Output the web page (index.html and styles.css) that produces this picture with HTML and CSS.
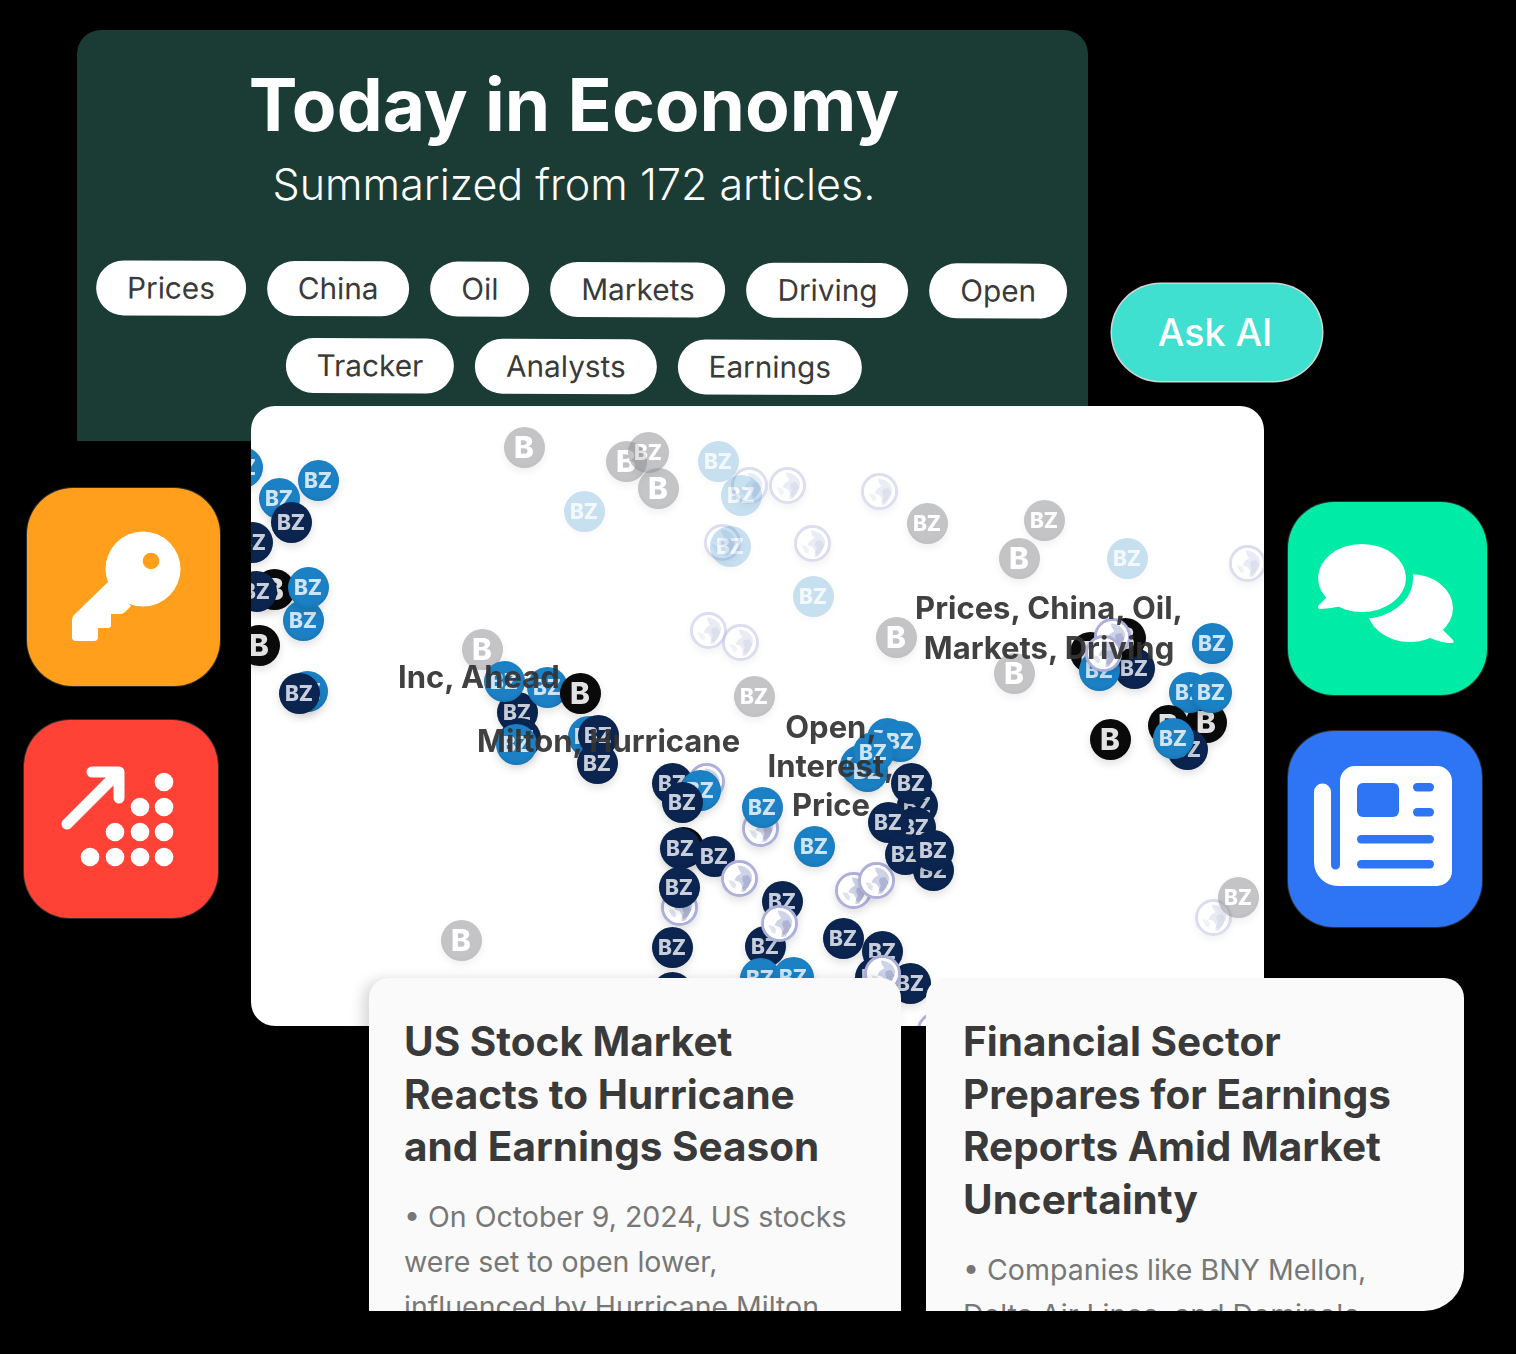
FILE: index.html
```html
<!DOCTYPE html>
<html lang="en">
<head>
<meta charset="utf-8">
<title>Today in Economy</title>
<link rel="stylesheet" href="styles.css">
</head>
<body>
<svg class="defs" width="0" height="0" aria-hidden="true">
  <symbol id="earth" viewBox="0 0 36 36">
    <circle cx="18" cy="18" r="18" fill="#fff"/>
    <path d="M16 3C24 3 31 8 33 16L30 24 25 33 20 34 21 27 18 22 12 20 15 15 20 12 17 7z" fill="#cfd3e8"/>
    <path d="M22 15L28 14 32 20 28 28 23 32 21 29 23 24 21 19z" fill="#aeb5d4"/>
    <path d="M5 20L11 21 14 25 13 30 9 28z" fill="#dfe2f0"/>
  </symbol>
</svg>
<main class="stage">

  <section class="panel">
    <h1 class="panel-title">Today in Economy</h1>
    <p class="panel-sub">Summarized from 172 articles.</p>
    <div class="chips">
      <div class="chip-row first">
        <span class="chip">Prices</span><span class="chip">China</span><span class="chip">Oil</span><span class="chip">Markets</span><span class="chip">Driving</span><span class="chip">Open</span>
      </div>
      <div class="chip-row">
        <span class="chip">Tracker</span><span class="chip">Analysts</span><span class="chip">Earnings</span>
      </div>
    </div>
  </section>

  <button class="ask" type="button">Ask AI</button>

  <div class="tile orange">
    <svg viewBox="0 0 193 198" aria-hidden="true">
      <path class="w" d="M81 94L47 127q-2 2-2 5V149q0 4 4 4H67q4 0 4-4V140H81q3 0 3-3V126H93q3 0 5-2l6-6z"/>
      <circle class="w" cx="116" cy="81" r="37.5"/>
      <circle class="hole-o" cx="124" cy="73" r="8.3"/>
    </svg>
  </div>
  <div class="tile red">
    <svg viewBox="0 0 194 198" aria-hidden="true">
      <path class="arrow" d="M43 104L94 53M68 52H95V78"/>
      <circle class="w" cx="140" cy="62" r="9.3"/>
      <circle class="w" cx="116" cy="87" r="9.3"/><circle class="w" cx="140" cy="87" r="9.3"/>
      <circle class="w" cx="91" cy="112" r="9.3"/><circle class="w" cx="116" cy="112" r="9.3"/><circle class="w" cx="140" cy="112" r="9.3"/>
      <circle class="w" cx="66" cy="137" r="9.3"/><circle class="w" cx="91" cy="137" r="9.3"/><circle class="w" cx="116" cy="137" r="9.3"/><circle class="w" cx="140" cy="137" r="9.3"/>
    </svg>
  </div>
  <div class="tile green">
    <svg viewBox="0 0 199 193" aria-hidden="true">
      <path class="w" d="M155 128L165 138q2 3-2 3-9 0-21-5z"/>
      <ellipse class="w" cx="122" cy="106" rx="43" ry="34"/>
      <ellipse class="bubble" cx="74" cy="76" rx="44" ry="34" paint-order="stroke"/>
      <path class="w" d="M39 95L31 103q-3 3 1 4 10 0 21-3z"/>
    </svg>
  </div>
  <div class="tile blue">
    <svg viewBox="0 0 194 196" aria-hidden="true">
      <path class="w" d="M26 61a8.5 8.5 0 0 1 17 0V134a4.5 4.5 0 0 0 9 0V50a15 15 0 0 1 15-15H149a15 15 0 0 1 15 15V140a15 15 0 0 1-15 15H50a24 24 0 0 1-24-24z"/>
      <rect class="b" x="69" y="52" width="42" height="34" rx="6"/>
      <rect class="b" x="125" y="52" width="21" height="8.5" rx="4.2"/>
      <rect class="b" x="125" y="77" width="21" height="8.5" rx="4.2"/>
      <rect class="b" x="69" y="104" width="77" height="8.5" rx="4.2"/>
      <rect class="b" x="69" y="129" width="77" height="8.5" rx="4.2"/>
    </svg>
  </div>

  <section class="map">
    <i class="pin sky" style="left:-9px;top:61px">BZ</i>
    <i class="pin sky" style="left:67px;top:74px">BZ</i>
    <i class="pin sky" style="left:28px;top:92px">BZ</i>
    <i class="pin navy" style="left:40px;top:116px">BZ</i>
    <i class="pin navy" style="left:1px;top:136px">BZ</i>
    <i class="pin ink" style="left:23px;top:183px">B</i>
    <i class="pin navy" style="left:5px;top:185px">BZ</i>
    <i class="pin sky" style="left:52px;top:214px">BZ</i>
    <i class="pin sky" style="left:57px;top:181px">BZ</i>
    <i class="pin ink" style="left:8px;top:239px">B</i>
    <i class="pin sky" style="left:56px;top:285px">BZ</i>
    <i class="pin navy" style="left:48px;top:287px">BZ</i>

    <i class="pin grey ink" style="left:273px;top:41px">B</i>
    <i class="pin grey ink" style="left:375px;top:55px">B</i>
    <i class="pin grey" style="left:397px;top:46px">BZ</i>
    <i class="pin grey ink" style="left:407px;top:82px">B</i>
    <i class="pin sky faded" style="left:333px;top:105px">BZ</i>
    <i class="pin sky faded" style="left:467px;top:55px">BZ</i>
    <svg class="globe faded" style="left:498px;top:79px"><use href="#earth"/></svg>
    <svg class="globe faded" style="left:536px;top:79px"><use href="#earth"/></svg>
    <i class="pin sky faded" style="left:490px;top:89px">BZ</i>
    <svg class="globe faded" style="left:471px;top:136px"><use href="#earth"/></svg>
    <i class="pin sky faded" style="left:479px;top:140px">BZ</i>
    <svg class="globe faded" style="left:561px;top:137px"><use href="#earth"/></svg>
    <i class="pin sky faded" style="left:562px;top:190px">BZ</i>
    <svg class="globe faded" style="left:457px;top:224px"><use href="#earth"/></svg>
    <svg class="globe faded" style="left:489px;top:236px"><use href="#earth"/></svg>
    <svg class="globe faded" style="left:628px;top:85px"><use href="#earth"/></svg>
    <i class="pin grey" style="left:676px;top:117px">BZ</i>
    <i class="pin grey" style="left:793px;top:114px">BZ</i>
    <i class="pin grey ink" style="left:768px;top:152px">B</i>
    <i class="pin sky faded" style="left:876px;top:152px">BZ</i>
    <svg class="globe faded" style="left:996px;top:157px"><use href="#earth"/></svg>
    <i class="pin grey ink" style="left:645px;top:231px">B</i>
    <i class="pin grey ink" style="left:763px;top:267px">B</i>
    <i class="pin grey" style="left:503px;top:290px">BZ</i>
    <i class="pin grey ink" style="left:231px;top:243px">B</i>
    <i class="pin grey ink" style="left:210px;top:534px">B</i>
    <svg class="globe faded" style="left:962px;top:511px"><use href="#earth"/></svg>
    <i class="pin grey" style="left:987px;top:491px">BZ</i>

    <i class="pin navy" style="left:266px;top:306px">BZ</i>
    <i class="pin sky" style="left:253px;top:275px">BZ</i>
    <i class="pin sky" style="left:296px;top:281px">BZ</i>
    <i class="pin ink" style="left:329px;top:287px">B</i>
    <i class="pin navy" style="left:269px;top:332px">BZ</i>
    <i class="pin sky" style="left:265px;top:338px">BZ</i>
    <i class="pin sky" style="left:337px;top:330px">BZ</i>
    <i class="pin navy" style="left:347px;top:329px">BZ</i>
    <i class="pin navy" style="left:346px;top:357px">BZ</i>

    <svg class="globe" style="left:455px;top:375px"><use href="#earth"/></svg>
    <i class="pin navy" style="left:421px;top:377px">BZ</i>
    <i class="pin sky" style="left:449px;top:384px">BZ</i>
    <i class="pin navy" style="left:431px;top:396px">BZ</i>
    <svg class="globe" style="left:509px;top:422px"><use href="#earth"/></svg>
    <i class="pin sky" style="left:511px;top:401px">BZ</i>
    <i class="pin sky" style="left:563px;top:440px">BZ</i>
    <i class="pin ink" style="left:432px;top:441px">B</i>
    <i class="pin navy" style="left:429px;top:442px">BZ</i>
    <i class="pin navy" style="left:463px;top:450px">BZ</i>
    <svg class="globe" style="left:488px;top:472px"><use href="#earth"/></svg>
    <svg class="globe" style="left:428px;top:501px"><use href="#earth"/></svg>
    <i class="pin navy" style="left:428px;top:481px">BZ</i>
    <i class="pin navy" style="left:531px;top:495px">BZ</i>
    <i class="pin navy" style="left:514px;top:540px">BZ</i>
    <svg class="globe" style="left:528px;top:517px"><use href="#earth"/></svg>
    <i class="pin navy" style="left:421px;top:541px">BZ</i>
    <i class="pin navy" style="left:421px;top:586px">BZ</i>
    <i class="pin sky" style="left:509px;top:572px">BZ</i>
    <i class="pin sky" style="left:542px;top:571px">BZ</i>
    <i class="pin navy" style="left:592px;top:532px">BZ</i>
    <i class="pin navy" style="left:659px;top:577px">BZ</i>
    <i class="pin navy" style="left:631px;top:545px">BZ</i>
    <i class="pin navy" style="left:624px;top:571px">BZ</i>
    <svg class="globe" style="left:631px;top:567px"><use href="#earth"/></svg>
    <svg class="globe" style="left:684px;top:624px"><use href="#earth"/></svg>
    <svg class="globe" style="left:602px;top:484px"><use href="#earth"/></svg>
    <svg class="globe" style="left:625px;top:474px"><use href="#earth"/></svg>
    <i class="pin sky" style="left:636px;top:332px">BZ</i>
    <i class="pin sky" style="left:649px;top:335px">BZ</i>
    <i class="pin sky" style="left:609px;top:359px">BZ</i>
    <i class="pin sky" style="left:616px;top:365px">BZ</i>
    <i class="pin sky" style="left:622px;top:346px">BZ</i>
    <i class="pin navy" style="left:666px;top:399px">BZ</i>
    <i class="pin navy" style="left:664px;top:421px">BZ</i>
    <i class="pin navy" style="left:660px;top:377px">BZ</i>
    <i class="pin navy" style="left:637px;top:416px">BZ</i>
    <i class="pin navy" style="left:682px;top:464px">BZ</i>
    <i class="pin navy" style="left:654px;top:448px">BZ</i>
    <i class="pin navy" style="left:682px;top:444px">BZ</i>

    <i class="pin navy" style="left:883px;top:262px">BZ</i>
    <i class="pin ink" style="left:874px;top:232px">B</i>
    <i class="pin ink" style="left:839px;top:246px">B</i>
    <i class="pin sky" style="left:848px;top:264px">BZ</i>
    <svg class="globe" style="left:861px;top:230px"><use href="#earth"/></svg>
    <svg class="globe" style="left:852px;top:247px"><use href="#earth"/></svg>
    <i class="pin sky" style="left:961px;top:237px">BZ</i>
    <i class="pin ink" style="left:955px;top:316px">B</i>
    <i class="pin sky" style="left:938px;top:286px">BZ</i>
    <i class="pin sky" style="left:960px;top:286px">BZ</i>
    <i class="pin ink" style="left:917px;top:319px">B</i>
    <i class="pin navy" style="left:936px;top:343px">BZ</i>
    <i class="pin sky" style="left:922px;top:332px">BZ</i>
    <i class="pin ink" style="left:859px;top:333px">B</i>

    <p class="tag tag-prices">Prices, China, Oil,<br>Markets, Driving</p>
    <p class="tag tag-inc">Inc, Ahead</p>
    <p class="tag tag-milton">Milton, Hurricane</p>
    <p class="tag tag-open">Open,<br>Interest,<br>Price</p>
  </section>

  <article class="story story-left">
    <h2 class="story-title">US Stock Market Reacts to Hurricane and Earnings Season</h2>
    <p class="story-body">• On October 9, 2024, US stocks were set to open lower, influenced by Hurricane Milton</p>
  </article>
  <article class="story story-right">
    <h2 class="story-title">Financial Sector Prepares for Earnings Reports Amid Market Uncertainty</h2>
    <p class="story-body">• Companies like BNY Mellon, Delta Air Lines, and Domino's</p>
  </article>
</main>
</body>
</html>
```
FILE: styles.css
```css
html, body {
  margin: 0;
  padding: 0;
  background: #000;
}
body {
  font-family: Inter, "Liberation Sans", sans-serif;
}
.defs {
  position: absolute;
}
.stage {
  position: relative;
  width: 1516px;
  height: 1354px;
  overflow: hidden;
}

/* Dark summary panel */
.panel {
  position: absolute;
  left: 77px;
  top: 30px;
  width: 1011px;
  height: 411px;
  box-sizing: border-box;
  padding: 34px 17px 0 0;
  background: #1b3b35;
  border-radius: 24px 24px 0 0;
  color: #fff;
  text-align: center;
}
.panel-title {
  margin: 0;
  font-size: 73px;
  line-height: 82px;
  font-weight: 700;
}
.panel-sub {
  margin: 12px 0 0;
  font-size: 43px;
  line-height: 52px;
  font-weight: 300;
}
.chips {
  display: flex;
  flex-direction: column;
  gap: 22px;
  margin-top: 51.5px;
  transform: rotate(.2deg);
}
.chip-row {
  display: flex;
  justify-content: center;
  gap: 21px;
}
.chip-row.first {
  justify-content: flex-start;
  padding-left: 19px;
}
.chip {
  height: 55px;
  padding: 0 30.9px;
  border-radius: 28px;
  background: #fff;
  color: #3a3a3a;
  font-size: 29.75px;
  line-height: 55px;
}

/* Ask AI pill */
.ask {
  position: absolute;
  left: 1112px;
  top: 284px;
  width: 210px;
  height: 97px;
  padding: 0 4px 0 0;
  border: 0;
  border-radius: 49px;
  background: #40e0d0;
  box-shadow: 0 0 0 1.5px #d4d4d4;
  color: #fff;
  font: 500 37.5px Inter, sans-serif;
}

/* App tiles */
.tile {
  position: absolute;
  border-radius: 46px;
  box-shadow: 0 0 0 1px rgba(150, 150, 150, .3);
}
.tile svg {
  display: block;
  width: 100%;
  height: 100%;
}
.orange { left: 27px; top: 488px; width: 193px; height: 198px; background: #ff9f1c; }
.red { left: 24px; top: 720px; width: 194px; height: 198px; background: #ff4136; }
.green { left: 1288px; top: 502px; width: 199px; height: 193px; background: #00eba5; }
.blue { left: 1288px; top: 731px; width: 194px; height: 196px; background: #2e75f6; }
.w { fill: #fff; }
.b { fill: #2e75f6; }
.hole-o { fill: #ff9f1c; }
.arrow {
  fill: none;
  stroke: #fff;
  stroke-width: 11;
  stroke-linecap: round;
  stroke-linejoin: round;
}
.bubble {
  fill: #fff;
  stroke: #00eba5;
  stroke-width: 14;
}

/* Map of news pins */
.map {
  position: absolute;
  left: 251px;
  top: 406px;
  width: 1013px;
  height: 620px;
  overflow: hidden;
  background: #fff;
  border-radius: 24px;
}
.pin {
  position: absolute;
  width: 41px;
  height: 41px;
  margin: -20.5px 0 0 -20.5px;
  border-radius: 50%;
  text-align: center;
  font-style: normal;
  font-weight: 800;
  font-size: 21px;
  line-height: 41px;
  color: #c9cfda;
  box-shadow: 0 4px 9px rgba(0, 0, 0, .12), inset 0 -2px 3px rgba(0, 0, 0, .08);
  filter: blur(.6px);
}
.sky { background: #1b80c4; color: #cfe4f4; }
.navy { background: #0b2550; }
.ink {
  background: #0a0a0a;
  color: #e2e2e2;
  font-size: 30px;
}
.grey {
  background: #8a8b8f;
  opacity: .5;
  color: #fff;
}
.faded { opacity: .24; }
.globe {
  position: absolute;
  width: 37px;
  height: 37px;
  margin: -18.5px 0 0 -18.5px;
  border-radius: 50%;
  box-sizing: border-box;
  border: 3px solid #aeb0dc;
  background: #fff;
  box-shadow: 0 4px 9px rgba(0, 0, 0, .12);
}
.globe.faded { opacity: .42; }
.tag {
  position: absolute;
  margin: 0;
  color: #333;
  opacity: .93;
  font-size: 31px;
  line-height: 40px;
  font-weight: 700;
  white-space: nowrap;
  text-align: center;
}
.tag-prices { left: 598px; top: 182px; width: 400px; }
.tag-inc { left: 147px; top: 251px; }
.tag-milton { left: 226px; top: 315px; }
.tag-open { left: 480px; top: 301px; width: 200px; line-height: 39px; }

/* Story cards */
.story {
  position: absolute;
  top: 978px;
  height: 333px;
  box-sizing: border-box;
  overflow: hidden;
  background: #fafafa;
}
.story-left {
  left: 369px;
  width: 532px;
  padding: 38px 35px 0;
  border-radius: 20px 20px 0 0;
  box-shadow: -6px 2px 14px rgba(0, 0, 0, .16);
}
.story-right {
  left: 926px;
  width: 538px;
  padding: 38px 37px 0;
  border-radius: 20px 20px 40px 0;
}
.story-title {
  margin: 0;
  color: #3a3a3a;
  font-size: 40.5px;
  line-height: 52.5px;
  font-weight: 700;
}
.story-body {
  margin: 20.5px 0 0;
  color: #777;
  font-size: 28.5px;
  line-height: 45px;
}
```
